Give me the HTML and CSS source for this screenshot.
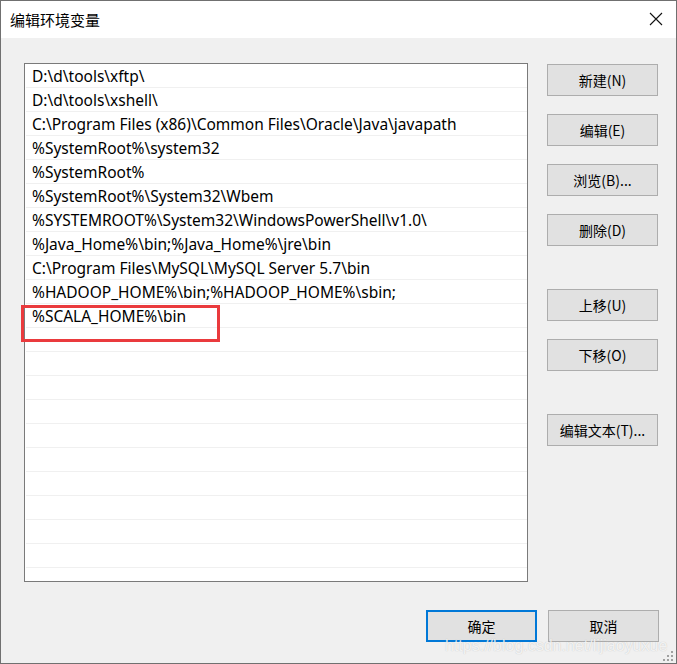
FILE: index.html
```html
<!DOCTYPE html>
<html lang="zh-CN">
<head>
<meta charset="utf-8">
<title>编辑环境变量</title>
<link rel="stylesheet" href="styles.css">
</head>
<body>
<div class="window">
  <div class="titlebar">
    <span class="title">编辑环境变量</span>
    <svg class="close" width="14" height="14" viewBox="0 0 14 14"><path d="M1 1 L13 13 M13 1 L1 13" stroke="#111" stroke-width="1.1" fill="none"/></svg>
  </div>
  <div class="content">
    <div class="main">
      <div class="list">
        <div class="row">D:\d\tools\xftp\</div>
        <div class="row">D:\d\tools\xshell\</div>
        <div class="row">C:\Program Files (x86)\Common Files\Oracle\Java\javapath</div>
        <div class="row">%SystemRoot%\system32</div>
        <div class="row">%SystemRoot%</div>
        <div class="row">%SystemRoot%\System32\Wbem</div>
        <div class="row">%SYSTEMROOT%\System32\WindowsPowerShell\v1.0\</div>
        <div class="row">%Java_Home%\bin;%Java_Home%\jre\bin</div>
        <div class="row">C:\Program Files\MySQL\MySQL Server 5.7\bin</div>
        <div class="row">%HADOOP_HOME%\bin;%HADOOP_HOME%\sbin;</div>
        <div class="row">%SCALA_HOME%\bin</div>
        <div class="row"></div>
        <div class="row"></div>
        <div class="row"></div>
        <div class="row"></div>
        <div class="row"></div>
        <div class="row"></div>
        <div class="row"></div>
        <div class="row"></div>
        <div class="row"></div>
        <div class="row"></div>
        <div class="row"></div>
      </div>
      <div class="side">
        <div class="group">
          <button class="btn">新建(N)</button>
          <button class="btn">编辑(E)</button>
          <button class="btn">浏览(B)...</button>
          <button class="btn">删除(D)</button>
        </div>
        <div class="group">
          <button class="btn">上移(U)</button>
          <button class="btn">下移(O)</button>
        </div>
        <div class="group">
          <button class="btn">编辑文本(T)...</button>
        </div>
      </div>
    </div>
    <div class="footer">
      <button class="btn primary">确定</button>
      <button class="btn">取消</button>
    </div>
  </div>
  <div class="highlight"></div>
  <div class="watermark">https://blog.csdn.net/lijiaoyuxue</div>
  <svg class="grip" width="10" height="10" viewBox="0 0 10 10">
    <rect x="8" y="0" width="2" height="2" fill="#a0a0a0"/>
    <rect x="4" y="4" width="2" height="2" fill="#a0a0a0"/>
    <rect x="8" y="4" width="2" height="2" fill="#a0a0a0"/>
    <rect x="0" y="8" width="2" height="2" fill="#a0a0a0"/>
    <rect x="4" y="8" width="2" height="2" fill="#a0a0a0"/>
    <rect x="8" y="8" width="2" height="2" fill="#a0a0a0"/>
  </svg>
</div>
</body>
</html>
```

FILE: styles.css
```css
html, body {
  margin: 0;
  padding: 0;
  background: #f0f0f0;
}
.window {
  position: relative;
  width: 677px;
  height: 664px;
  box-sizing: border-box;
  border: 1px solid #707070;
  background: #f0f0f0;
  display: flex;
  flex-direction: column;
  overflow: hidden;
  font-family: "Noto Sans", "Noto Sans CJK SC", sans-serif;
}
.titlebar {
  height: 37px;
  background: #ffffff;
  display: flex;
  align-items: center;
  justify-content: space-between;
  padding: 0 13px 0 9px;
  flex: none;
}
.title {
  font-family: "Noto Sans CJK SC", sans-serif;
  font-size: 15px;
  color: #000;
  margin-top: -1px;
}
.close {
  margin-top: -2px;
}
.content {
  flex: 1;
  display: flex;
  flex-direction: column;
  padding: 25px 17px 20px 23px;
}
.main {
  display: flex;
  gap: 19px;
}
.list {
  width: 504px;
  height: 519px;
  box-sizing: border-box;
  border: 1px solid #7a7a7a;
  background: #fff;
  padding: 0 0 0 1px;
  overflow: hidden;
}
.row {
  height: 24px;
  box-sizing: border-box;
  border-bottom: 1px solid #f0f0f0;
  padding: 1px 0 0 6px;
  font-size: 15.5px;
  line-height: 22px;
  color: #000;
  white-space: nowrap;
}
.side {
  display: flex;
  flex-direction: column;
  gap: 43px;
  padding-top: 1px;
}
.group {
  display: flex;
  flex-direction: column;
  gap: 18px;
}
.btn {
  width: 111px;
  height: 32px;
  box-sizing: border-box;
  border: 1px solid #adadad;
  background: #e1e1e1;
  font-family: "Noto Sans CJK SC", sans-serif;
  font-size: 14px;
  color: #000;
  padding: 0;
  margin: 0;
}
.footer {
  margin-top: 28px;
  display: flex;
  justify-content: flex-end;
  gap: 11px;
}
.primary {
  border: 2px solid #0078d7;
}
.highlight {
  position: absolute;
  left: 20px;
  top: 304px;
  width: 199px;
  height: 37px;
  box-sizing: border-box;
  border: 3px solid #ea3a3d;
}
.watermark {
  position: absolute;
  left: 444px;
  top: 636px;
  font-family: "Liberation Sans", sans-serif;
  font-size: 16px;
  line-height: 18px;
  color: rgba(255, 255, 255, 0.8);
  text-shadow: 0 0 1px rgba(110, 110, 110, 0.4);
  white-space: nowrap;
}
.grip {
  position: absolute;
  right: 3px;
  bottom: 2px;
}
```
